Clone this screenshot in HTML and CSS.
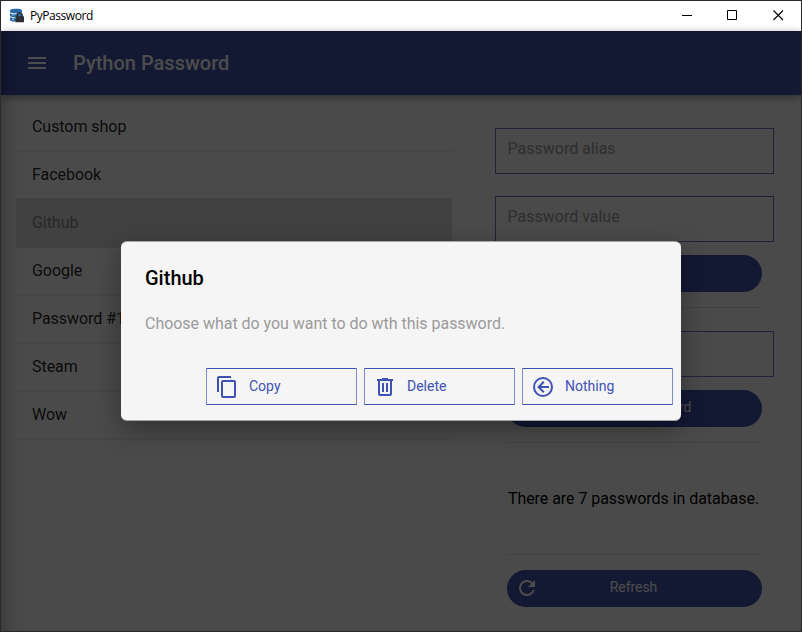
FILE: index.html
```html
<!DOCTYPE html>
<html lang="en">
<head>
<meta charset="utf-8">
<title>PyPassword</title>
<link rel="stylesheet" href="styles.css">
</head>
<body>
<div class="window">
  <div class="titlebar">
    <svg class="app-icon" width="16" height="16" viewBox="0 0 16 16">
      <path d="M1 2.500C1 .2 13 .2 13 2.500V12c0 2.200-12 2.200-12 0z" fill="#2668a8"/>
      <path d="M1 4.700c2 1.300 7 1.500 12 .5M1 8.700c1.500 .8 4 1.300 6 1.100" fill="none" stroke="#fff" stroke-width="1"/>
      <path d="M3 7h2M3 11.500h2" stroke="#8fc3ec" stroke-width="1"/>
      <path d="M8.200 9V7.500a2.500 2.500 0 0 1 5 0V9" fill="none" stroke="#2c2e33" stroke-width="1.500"/>
      <rect x="6.500" y="8.300" width="8.500" height="6" rx=".5" fill="#2c2e33"/>
    </svg>
    <span class="app-name">PyPassword</span>
    <div class="controls">
      <svg width="46" height="30" viewBox="0 0 46 30"><path d="M19 14.500h10" stroke="#000"/></svg>
      <svg width="46" height="30" viewBox="0 0 46 30"><path d="M18.500 9.500h9v9h-9z" fill="none" stroke="#000"/></svg>
      <svg width="46" height="30" viewBox="0 0 46 30"><path d="M18.500 9.500l9.500 9.500M28 9.500l-9.500 9.500" fill="none" stroke="#000" stroke-width="1.100"/></svg>
    </div>
  </div>
  <div class="app">
    <header class="toolbar">
      <svg width="24" height="24" viewBox="0 0 24 24" fill="#fff"><path d="M3 6h18v2H3V6m0 5h18v2H3v-2m0 5h18v2H3v-2z"/></svg>
      <h1>Python Password</h1>
    </header>
    <main class="content">
      <ul class="list">
        <li>Custom shop</li>
        <li>Facebook</li>
        <li class="selected">Github</li>
        <li>Google</li>
        <li>Password #1</li>
        <li>Steam</li>
        <li>Wow</li>
      </ul>
      <section class="panel">
        <div class="field">Password alias</div>
        <div class="field">Password value</div>
        <div class="pill"></div>
        <hr>
        <div class="field"></div>
        <div class="pill">Random password</div>
        <hr>
        <p class="count">There are 7 passwords in database.</p>
        <hr>
        <div class="pill">
          <svg class="pill-icon" width="24" height="24" viewBox="0 0 24 24" fill="#fff"><path d="M17.650 6.350A7.958 7.958 0 0 0 12 4a8 8 0 1 0 7.730 10h-2.080A6 6 0 1 1 12 6c1.660 0 3.140.69 4.220 1.780L13 11h7V4l-2.350 2.350z"/></svg>
          Refresh
        </div>
      </section>
    </main>
    <div class="overlay">
      <div class="dialog">
        <h2>Github</h2>
        <p>Choose what do you want to do wth this password.</p>
        <div class="actions">
          <div class="action">
            <svg width="24" height="24" viewBox="0 0 24 24"><path d="M19 21H8V7h11m0-2H8a2 2 0 0 0-2 2v14a2 2 0 0 0 2 2h11a2 2 0 0 0 2-2V7a2 2 0 0 0-2-2m-3-4H4a2 2 0 0 0-2 2v14h2V3h12V1z"/></svg>
            Copy
          </div>
          <div class="action">
            <svg width="24" height="24" viewBox="0 0 24 24"><path d="M9 3v1H4v2h1v13a2 2 0 0 0 2 2h10a2 2 0 0 0 2-2V6h1V4h-5V3H9M7 6h10v13H7V6m2 2v9h2V8H9m4 0v9h2V8h-2z"/></svg>
            Delete
          </div>
          <div class="action">
            <svg width="24" height="24" viewBox="0 0 24 24"><path d="M18 11v2h-8l3.500 3.500-1.420 1.420L6.160 12l5.920-5.920L13.500 7.500 10 11h8M2 12a10 10 0 1 1 20 0 10 10 0 0 1-20 0m2 0a8 8 0 1 0 16 0 8 8 0 0 0-16 0z"/></svg>
            Nothing
          </div>
        </div>
      </div>
    </div>
  </div>
</div>
</body>
</html>
```
FILE: styles.css
```css
* { box-sizing: border-box; }

body {
  margin: 0;
  font-family: Roboto, sans-serif;
  font-size: 16px;
}

.window {
  display: flex;
  flex-direction: column;
  width: 802px;
  height: 632px;
  border: 1px solid #2b292b;
  overflow: hidden;
}

.titlebar {
  display: flex;
  align-items: center;
  flex: 0 0 30px;
  padding-left: 8px;
  background: #fff;
}

.app-name {
  margin-left: 5px;
  font: 12px "Open Sans", sans-serif;
  letter-spacing: -0.45px;
  line-height: 16px;
  color: #000;
}

.controls { display: flex; margin-left: auto; }

.app {
  position: relative;
  display: flex;
  flex-direction: column;
  flex: 1;
  background: #f8f8f8;
}

.toolbar {
  display: flex;
  align-items: center;
  gap: 24px;
  height: 64px;
  padding-left: 24px;
  background: #4250ac;
  color: #fff;
  box-shadow: 0 2px 8px rgba(0, 0, 0, 0.4);
}

.toolbar h1 {
  margin: 0;
  font-size: 20px;
  font-weight: 500;
}

.content { display: flex; }

.list {
  width: 436px;
  margin: 9px 0 0 15px;
  padding: 0;
  list-style: none;
}

.list li {
  height: 48px;
  padding-left: 16px;
  border-bottom: 2px solid #e9e9e9;
  line-height: 45px;
  letter-spacing: -0.05px;
  color: rgba(0, 0, 0, 0.87);
}

.list .selected {
  margin-top: -2px;
  height: 50px;
  padding-top: 2px;
  background: #d9d9d9;
  border-color: #d9d9d9;
  color: #858585;
}

.panel {
  display: flex;
  flex-direction: column;
  align-items: center;
  width: 279px;
  margin: 33px 0 0 43px;
}

.field {
  width: 279px;
  height: 46px;
  margin-bottom: 22px;
  padding-left: 11.500px;
  border: 1px solid #6b73bd;
  line-height: 39px;
  color: #9a9a9a;
}

.field + .pill { margin-top: -9px; }

.pill {
  position: relative;
  width: 255px;
  height: 37px;
  padding-right: 2px;
  border-radius: 19px;
  background: #4250ac;
  font-size: 14px;
  line-height: 35px;
  letter-spacing: -0.05px;
  text-align: center;
  color: #fff;
}

.pill-icon { position: absolute; left: 8px; top: 6px; }

.panel hr {
  width: 254px;
  height: 1px;
  margin: 15px 0 23px;
  border: 0;
  background: #dadada;
}

.panel .count {
  margin: 0;
  height: 88px;
  padding-right: 2px;
  line-height: 66px;
  letter-spacing: -0.05px;
  color: #000;
}

.panel .count + hr { margin: 0 0 15px; }

.overlay {
  position: absolute;
  inset: 0;
  display: flex;
  justify-content: center;
  align-items: center;
  padding-bottom: 1px;
  background: rgba(0, 0, 0, 0.7);
  box-shadow: inset 14px 0 18px -12px rgba(0, 0, 0, 0.3);
}

.dialog {
  width: 560px;
  height: 180px;
  border-radius: 6px;
  padding: 25px 8px 0 24px;
  border-top: 1px solid #a5a3a8;
  border-bottom: 1px solid #a5a3a8;
  padding-top: 24px;
  background: #f5f5f5;
  box-shadow: 0 8px 26px rgba(0, 0, 0, 0.35);
}

.dialog h2 {
  margin: 0;
  font-size: 20px;
  font-weight: 500;
  line-height: 24px;
  color: #000;
}

.dialog p {
  margin: 22px 0 0;
  line-height: 24px;
  letter-spacing: -0.03px;
  color: #9b9b9b;
}

.actions {
  display: flex;
  justify-content: flex-end;
  gap: 7px;
  margin-top: 32px;
}

.action {
  display: flex;
  align-items: center;
  gap: 10px;
  width: 151px;
  height: 37px;
  padding: 0 0 1px 8px;
  border: 1px solid #3f51b5;
  border-left-color: #7f8acb;
  border-right-color: #7f8acb;
  border-radius: 1px;
  font-size: 14px;
  color: #3f51b5;
}

.action svg { fill: #3f51b5; position: relative; top: 1px; }
```
